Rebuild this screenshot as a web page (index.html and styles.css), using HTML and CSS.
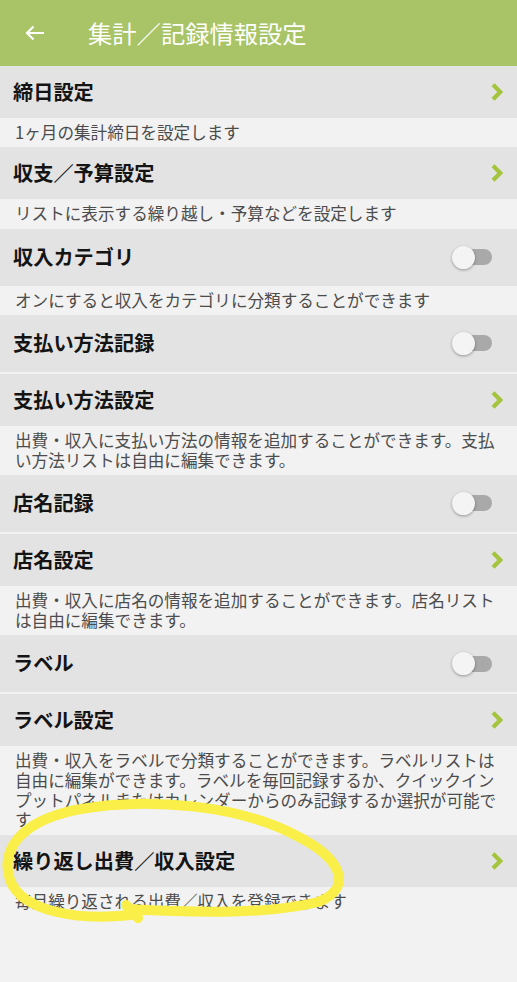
FILE: index.html
```html
<!DOCTYPE html>
<html lang="ja">
<head>
<meta charset="utf-8">
<title>集計／記録情報設定</title>
<link rel="stylesheet" href="styles.css">
</head>
<body>
<div class="page">
  <header class="appbar">
    <svg class="back" width="20" height="16" viewBox="0 0 20 16"><path d="M19 8 H2 M8.5 1.5 L2 8 L8.5 14.5" fill="none" stroke="#fff" stroke-width="2.2"/></svg>
    <h1 class="appbar-title">集計／記録情報設定</h1>
  </header>

  <div class="row"><span class="row-title">締日設定</span><svg class="chev" width="12" height="18" viewBox="0 0 12 18"><path d="M2 1.8 L9.3 9 L2 16.2" fill="none" stroke="#a3c43c" stroke-width="4.2"/></svg></div>
  <p class="desc">1ヶ月の集計締日を設定します</p>

  <div class="row"><span class="row-title">収支／予算設定</span><svg class="chev" width="12" height="18" viewBox="0 0 12 18"><path d="M2 1.8 L9.3 9 L2 16.2" fill="none" stroke="#a3c43c" stroke-width="4.2"/></svg></div>
  <p class="desc">リストに表示する繰り越し・予算などを設定します</p>

  <div class="row row-toggle"><span class="row-title">収入カテゴリ</span><span class="switch"></span></div>
  <p class="desc">オンにすると収入をカテゴリに分類することができます</p>

  <div class="row row-toggle"><span class="row-title">支払い方法記録</span><span class="switch"></span></div>
  <div class="sep"></div>
  <div class="row"><span class="row-title">支払い方法設定</span><svg class="chev" width="12" height="18" viewBox="0 0 12 18"><path d="M2 1.8 L9.3 9 L2 16.2" fill="none" stroke="#a3c43c" stroke-width="4.2"/></svg></div>
  <p class="desc">出費・収入に支払い方法の情報を追加することができます。支払い方法リストは自由に編集できます。</p>

  <div class="row row-toggle"><span class="row-title">店名記録</span><span class="switch"></span></div>
  <div class="sep"></div>
  <div class="row"><span class="row-title">店名設定</span><svg class="chev" width="12" height="18" viewBox="0 0 12 18"><path d="M2 1.8 L9.3 9 L2 16.2" fill="none" stroke="#a3c43c" stroke-width="4.2"/></svg></div>
  <p class="desc">出費・収入に店名の情報を追加することができます。店名リストは自由に編集できます。</p>

  <div class="row row-toggle"><span class="row-title">ラベル</span><span class="switch"></span></div>
  <div class="sep"></div>
  <div class="row"><span class="row-title">ラベル設定</span><svg class="chev" width="12" height="18" viewBox="0 0 12 18"><path d="M2 1.8 L9.3 9 L2 16.2" fill="none" stroke="#a3c43c" stroke-width="4.2"/></svg></div>
  <p class="desc">出費・収入をラベルで分類することができます。ラベルリストは自由に編集ができます。ラベルを毎回記録するか、クイックインプットパネルまたはカレンダーからのみ記録するか選択が可能です</p>

  <div class="row"><span class="row-title">繰り返し出費／収入設定</span><svg class="chev" width="12" height="18" viewBox="0 0 12 18"><path d="M2 1.8 L9.3 9 L2 16.2" fill="none" stroke="#a3c43c" stroke-width="4.2"/></svg></div>
  <p class="desc">毎月繰り返される出費／収入を登録できます</p>

  <svg class="scribble" width="517" height="982" viewBox="0 0 517 982">
    <path d="M138 914 C 80 922, 22 912, 10 880 C 0 850, 20 822, 75 810 C 150 796, 240 806, 295 835 C 342 858, 354 888, 318 902 C 270 914, 200 913, 128 909 M126 905 L138 918" fill="none" stroke="#f9ef48" stroke-width="10" stroke-linecap="round" stroke-linejoin="round"/>
  </svg>
</div>
</body>
</html>
```

FILE: styles.css
```css
html, body {
  margin: 0;
  padding: 0;
  background: #f2f2f2;
}

.page {
  position: relative;
  width: 517px;
  min-height: 982px;
  font-family: "Noto Sans CJK JP", "Noto Sans", sans-serif;
  overflow: hidden;
}

.appbar {
  height: 66px;
  background: #a8c466;
  display: flex;
  align-items: center;
  padding-left: 25px;
  gap: 43px;
  box-sizing: border-box;
}

.back {
  display: block;
  flex: none;
}

.appbar-title {
  margin: 0;
  font-size: 24.3px;
  font-weight: 400;
  color: #ffffff;
  line-height: 1;
  letter-spacing: 0;
}

.row {
  height: 52px;
  background: #e3e3e3;
  display: flex;
  align-items: center;
  justify-content: space-between;
  padding: 0 14px 0 13px;
  box-sizing: border-box;
}

.row-toggle {
  height: 57px;
  padding-right: 25px;
}

.row-title {
  font-size: 20.2px;
  font-weight: 700;
  color: #141414;
  line-height: 1;
}

.chev {
  display: block;
  flex: none;
}

.switch {
  position: relative;
  display: block;
  flex: none;
  width: 37px;
  height: 16px;
  border-radius: 8px;
  background: #a9a9a9;
}

.switch::before {
  content: "";
  position: absolute;
  left: -3px;
  top: -3.5px;
  width: 23px;
  height: 23px;
  border-radius: 50%;
  background: #f4f4f4;
  box-shadow: 0 1px 3px rgba(0, 0, 0, 0.35);
}

.sep {
  height: 2px;
  background: #f2f2f2;
}

.desc {
  margin: 0;
  padding: 5px 14px 4.5px 15px;
  background: #f2f2f2;
  font-size: 16.6px;
  line-height: 19.8px;
  color: #4c4c4c;
}

.scribble {
  position: absolute;
  left: 0;
  top: 0;
  pointer-events: none;
}
```
